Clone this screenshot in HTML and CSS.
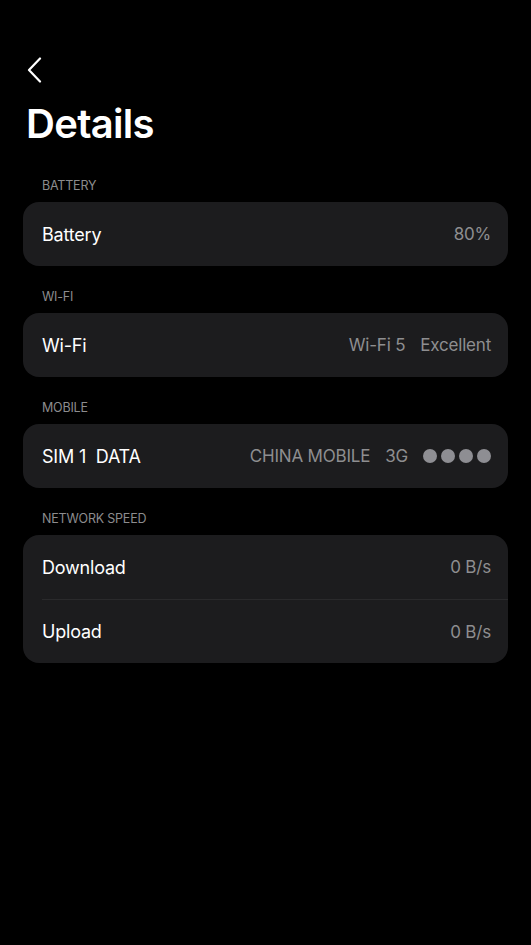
FILE: index.html
```html
<!DOCTYPE html>
<html>
<head>
<meta charset="utf-8">
<link rel="stylesheet" href="styles.css">
</head>
<body>
<div class="page">
  <div class="topbar">
    <svg class="back" width="16" height="26" viewBox="0 0 16 26"><path d="M13 1.5 L2 13 L13 24.5" fill="none" stroke="#fff" stroke-width="2.2" stroke-linecap="round" stroke-linejoin="round"/></svg>
  </div>
  <h1 class="title">Details</h1>

  <div class="label first">BATTERY</div>
  <div class="card">
    <div class="row"><span class="name">Battery</span><span class="vals"><span>80%</span></span></div>
  </div>

  <div class="label">WI-FI</div>
  <div class="card">
    <div class="row"><span class="name">Wi-Fi</span><span class="vals"><span>Wi-Fi 5</span><span>Excellent</span></span></div>
  </div>

  <div class="label">MOBILE</div>
  <div class="card">
    <div class="row"><span class="name">SIM 1&nbsp; DATA</span><span class="vals"><span>CHINA MOBILE</span><span>3G</span><span class="dots"><i></i><i></i><i></i><i></i></span></span></div>
  </div>

  <div class="label">NETWORK SPEED</div>
  <div class="card">
    <div class="row"><span class="name">Download</span><span class="vals"><span>0 B/s</span></span></div>
    <div class="row divided"><span class="name">Upload</span><span class="vals"><span>0 B/s</span></span></div>
  </div>
</div>
</body>
</html>
```

FILE: styles.css
```css
* { box-sizing: border-box; }
html, body { margin: 0; padding: 0; background: #000; }
body { font-family: Inter, "Noto Sans", sans-serif; color: #fff; }
.page { padding: 0 23px; }
.topbar { height: 96px; padding-top: 57px; padding-left: 4px; }
.back { display: block; }
.title { margin: 0; padding-left: 3px; font-size: 40px; font-weight: 600; letter-spacing: -0.7px; line-height: 56px; height: 57px; }
.label { padding-left: 19px; font-size: 12.5px; color: #8c8c8e; line-height: 16px; margin-top: 23px; margin-bottom: 8px; letter-spacing: -0.2px; }
.label.first { margin-top: 25px; }
.card { background: #1c1c1e; border-radius: 16px; overflow: hidden; }
.row { height: 64px; display: flex; align-items: center; justify-content: space-between; padding: 0 17px 0 19px; }
.row.divided { border-top: 1px solid #2a2a2c; margin-left: 19px; padding-left: 0; height: 64px; }
.name { font-size: 18px; letter-spacing: -0.2px; color: #fff; }
.vals { display: flex; align-items: center; gap: 15px; font-size: 17px; color: #8e8e90; letter-spacing: -0.2px; }
.dots { display: flex; gap: 4px; }
.dots i { display: block; width: 14px; height: 14px; border-radius: 50%; background: #8e8e93; }
```
